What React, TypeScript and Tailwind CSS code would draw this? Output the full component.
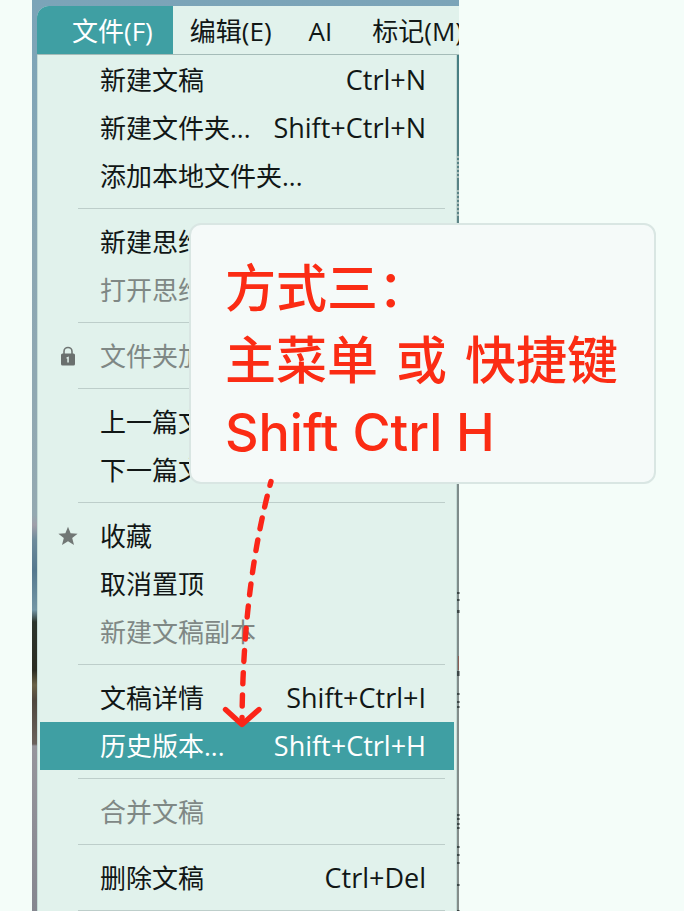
import React from "react";

type Item = {
  label: string;
  shortcut?: string;
  icon?: "lock" | "star";
  disabled?: boolean;
  active?: boolean;
};

const groups: Item[][] = [
  [
    { label: "新建文稿", shortcut: "Ctrl+N" },
    { label: "新建文件夹...", shortcut: "Shift+Ctrl+N" },
    { label: "添加本地文件夹..." },
  ],
  [{ label: "新建思维导图" }, { label: "打开思维导图", disabled: true }],
  [{ label: "文件夹加密", icon: "lock", disabled: true }],
  [{ label: "上一篇文稿" }, { label: "下一篇文稿" }],
  [
    { label: "收藏", icon: "star" },
    { label: "取消置顶" },
    { label: "新建文稿副本", disabled: true },
  ],
  [
    { label: "文稿详情", shortcut: "Shift+Ctrl+I" },
    { label: "历史版本...", shortcut: "Shift+Ctrl+H", active: true },
  ],
  [{ label: "合并文稿", disabled: true }],
  [{ label: "删除文稿", shortcut: "Ctrl+Del" }],
];

const LockIcon = () => (
  <svg className="w-[14px] h-[20px]" viewBox="0 0 14 20" aria-hidden="true">
    <path d="M3 9V5.5a4 4 0 0 1 8 0V9" fill="none" stroke="#6f7573" strokeWidth="1.6" />
    <rect y="7.5" width="14" height="12" rx="1.5" fill="#6a706e" />
    <path d="M5.4 11.4L7.8 10.6V16.4H6.3V12.6H5.4Z" fill="#e1f2ec" />
  </svg>
);

const StarIcon = () => (
  <svg className="w-[20px] h-[20px]" viewBox="0 0 20 20" aria-hidden="true">
    <path
      d="M10 .8L12.6 7.2L19.6 7.7L14.2 12.1L16 18.9L10 15.2L4 18.9L5.8 12.1L.4 7.7L7.4 7.2Z"
      fill="#717775"
    />
  </svg>
);

const MenuItem = ({ item }: { item: Item }) => {
  const color = item.active ? "bg-[#3f9fa3] text-white" : item.disabled ? "text-[#7f8885]" : "text-[#111716]";
  return (
    <button
      type="button"
      role="menuitem"
      disabled={item.disabled}
      className={`flex h-12 w-full items-center pr-7 text-left ${color}`}
    >
      <span className="flex w-[60px] shrink-0 justify-center pr-1">
        {item.icon === "lock" && <LockIcon />}
        {item.icon === "star" && <StarIcon />}
      </span>
      <span className="flex-1">{item.label}</span>
      {item.shortcut && <span className="text-[27px] leading-9">{item.shortcut}</span>}
    </button>
  );
};

const MenuBar = () => (
  <nav className="flex h-[49px] overflow-hidden rounded-tl-xl border-b border-[#a5bcb8] bg-[#e1f2ec] pt-px text-[#111716]">
    <button type="button" className="-mt-px shrink-0 bg-[#3f9fa3] pl-[35px] pr-5 pt-px text-white">
      文件(F)
    </button>
    <button type="button" className="shrink-0 px-[17px]">
      编辑(E)
    </button>
    <button type="button" className="shrink-0 px-5">
      AI
    </button>
    <button type="button" className="shrink-0 px-5">
      标记(M)
    </button>
  </nav>
);

// bits of the document window that peek out behind the menu's right edge
const EdgeSpecks = () => (
  <svg className="absolute left-[457px] top-0 h-[911px] w-[3px]" viewBox="0 0 3 911" aria-hidden="true">
    <path
      d="M1 156V178M1 190V218"
      stroke="#a9bdb9"
      strokeWidth="2"
      strokeDasharray="2 2"
    />
    <path d="M1.500 656V670" stroke="#8a5f56" strokeWidth="1" />
    <path
      d="M1 592v2M1 599v2M1 610v3M1 671v5M1 693v2M1 701v2M1 706v2M1 814v2M1 818v2M1 823v2M1 827v2M1 846v2M1 854v2M1 862v2M1 884v2M1 910v1"
      stroke="#3c4646"
      strokeWidth="3"
    />
  </svg>
);

const Callout = () => (
  <div className="absolute left-[189px] top-[223px] w-[467px] rounded-xl border-2 border-[#d9e6e3] bg-[#f5faf9] pl-[34px] pt-[28px] pb-[13px] font-['Inter','Noto_Sans_CJK_SC',sans-serif] text-[51px] font-medium leading-[72px] text-[#fb2c14] whitespace-nowrap">
    <p>方式三：</p>
    <p className="flex gap-[18px]">
      <span>主菜单</span> <span>或</span> <span>快捷键</span>
    </p>
    <p className="text-[52px]">Shift Ctrl H</p>
  </div>
);

const Arrow = () => (
  <svg
    className="pointer-events-none absolute left-[210px] top-[470px] h-[270px] w-[80px]"
    viewBox="0 0 80 270"
    fill="none"
    stroke="#fb2518"
    strokeWidth="5.4"
    strokeLinecap="round"
    strokeLinejoin="round"
    aria-hidden="true"
  >
    <path d="M61 11.500Q33 115 32 252" strokeDasharray="11 11.300" strokeDashoffset="7" />
    <path d="M15.500 239.500L32 254.500L49 239.500" />
  </svg>
);

export default function App() {
  return (
    <main className="relative h-screen overflow-hidden bg-[#f4fdf9] pl-8">
      <div className="w-full max-w-[427px] bg-[linear-gradient(#7ba4b8_0px,#8ba7b3_250px,#94a9b1_515px,#a09fa9_525px,#6d8b9b_540px,#54788e_570px,#7396a5_610px,#2c352c_622px,#2b2c22_670px,#6a6247_685px,#4f473e_700px,#6b625c_744px,#96959c_746px,#85868f_911px)] pl-[5px] pt-[6px] font-['Open_Sans','Noto_Sans_CJK_SC',sans-serif] text-[26px] leading-9 whitespace-nowrap">
        <MenuBar />
        <div className="bg-linear-to-b from-[#477f83] from-0% via-[#7e8c8b] via-50% to-[#858e8b] to-100% pr-[2px]">
          <div role="menu" className="border-x border-[#c5dcd7] bg-[#e1f2ec] px-0.5 pt-px">
            {groups.map((group, i) => (
              <div key={i}>
                {group.map((item) => (
                  <MenuItem key={item.label} item={item} />
                ))}
                <hr className="ml-[38px] mr-[9px] mt-2 mb-[9px] border-t border-[#bdceca]" />
              </div>
            ))}
          </div>
        </div>
      </div>
      <EdgeSpecks />
      <Callout />
      <Arrow />
    </main>
  );
}
